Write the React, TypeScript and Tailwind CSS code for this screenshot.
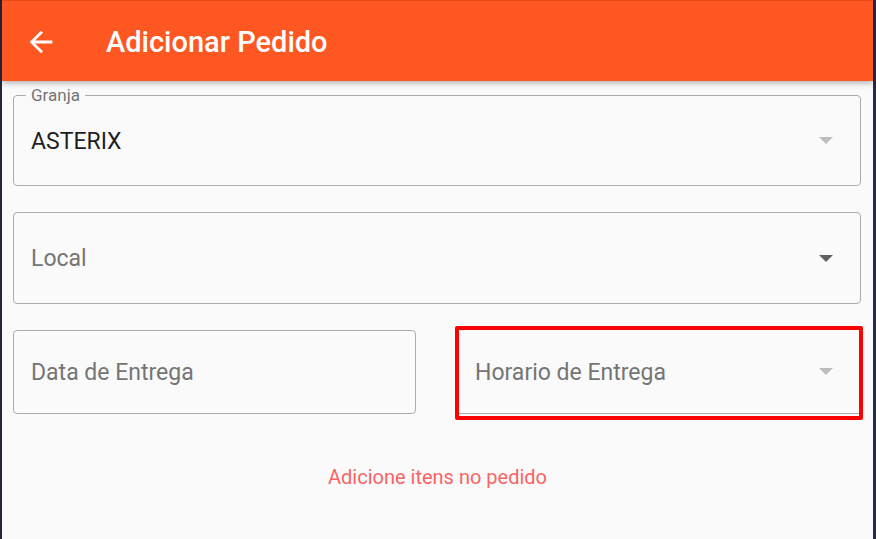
// Triangulo do dropdown (estilo material)
function DropArrow({ disabled }: { disabled?: boolean }) {
  return (
    <svg width="14" height="7" viewBox="0 0 14 7" className="shrink-0">
      <path d="M0 0 L14 0 L7 7 Z" fill={disabled ? "#bdbdbd" : "#616161"} />
    </svg>
  );
}

function BackArrow() {
  return (
    <svg width="34" height="34" viewBox="0 0 24 24" className="shrink-0">
      <path d="M20 11H7.83l5.59-5.59L12 4l-8 8 8 8 1.41-1.41L7.83 13H20v-2z" fill="#fff" />
    </svg>
  );
}

export default function App() {
  return (
    <div className="w-[876px] h-[539px] flex bg-[#fafafa] overflow-hidden font-['Roboto',sans-serif]">
      <div className="w-[2px] bg-[#23263a]" />
      <main className="flex-1 flex flex-col">
        {/* AppBar */}
        <header className="relative z-10 h-[81px] bg-[#ff5722] border-t border-[#e64a19] shadow-[0_2px_6px_rgba(0,0,0,0.3)] flex items-center">
          <div className="ml-[22px] mt-[1px]">
            <BackArrow />
          </div>
          <h1 className="ml-[48px] mt-[3px] text-[29px] font-medium text-white">Adicionar Pedido</h1>
        </header>

        <div className="pl-[11px] pt-[14px] flex flex-col gap-[26px]">
          {/* Granja */}
          <div className="relative w-[848px] h-[91px] rounded-[4px] border border-[#acacac] flex items-center pl-[17px] pr-[27px]">
            <span className="absolute left-[12px] top-[-12px] px-[5px] bg-[#fafafa] text-[17px] leading-[22px] text-[#757575]">Granja</span>
            <span className="flex-1 pt-[3px] text-[23px] text-[#1f1f1f]">ASTERIX</span>
            <DropArrow disabled />
          </div>

          {/* Local */}
          <div className="w-[848px] h-[92px] rounded-[4px] border border-[#acacac] flex items-center pl-[17px] pr-[27px]">
            <span className="flex-1 pt-[3px] text-[23px] text-[#757575]">Local</span>
            <DropArrow />
          </div>

          {/* Data e horario */}
          <div className="flex gap-[41px]">
            <div className="w-[403px] h-[84px] rounded-[4px] border border-[#acacac] flex items-center pl-[17px]">
              <span className="pt-[3px] text-[23px] text-[#757575]">Data de Entrega</span>
            </div>
            <div className="relative w-[404px] h-[84px] border-b border-[#acacac] flex items-center pl-[18px] pr-[28px]">
              <span className="flex-1 pt-[3px] text-[23px] text-[#757575]">Horario de Entrega</span>
              <DropArrow disabled />
              <div className="absolute left-[-2px] right-[-2px] top-[-4px] bottom-[-7px] border-4 border-[#ff0000] rounded-[2px]" />
            </div>
          </div>
        </div>

        <p className="mt-[48px] text-center text-[20px] text-[#f86464]">Adicione itens no pedido</p>
      </main>
      <div className="w-[3px] bg-[#262a45]" />
    </div>
  );
}
